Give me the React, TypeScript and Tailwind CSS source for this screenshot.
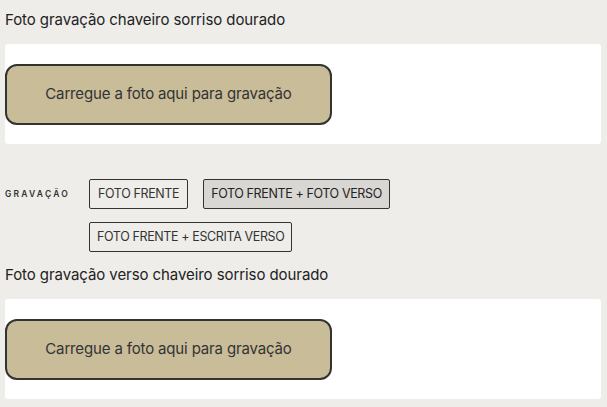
export default function App() {
  return (
    <div className="min-h-screen bg-[#eeede9] px-[5px] pt-[10px] font-['Inter',sans-serif] text-[#222]">
      <p className="text-[15px] leading-[20px] tracking-[-0.005em]">
        Foto gravação chaveiro sorriso dourado
      </p>
      <div className="mt-[14px] h-[100px] w-[596px] rounded-[3px] bg-white pt-[20px]">
        <button className="h-[61px] w-[327px] rounded-[12px] border-2 border-[#333] bg-[#c9bc99] text-[15px] text-[#333] tracking-[-0.01em]">
          Carregue a foto aqui para gravação
        </button>
      </div>

      <div className="mt-[35px] flex">
        <div className="w-[84px] pt-[9px] text-[8.5px] font-semibold tracking-[0.26em] text-[#333]">
          GRAVAÇÃO
        </div>
        <div className="flex w-[320px] flex-wrap gap-x-[15px] gap-y-[13px]">
          <button className="h-[30px] rounded-[2px] border border-[#333] px-[8px] text-[12.5px] tracking-[-0.03em] text-[#333]">
            FOTO FRENTE
          </button>
          <button className="h-[30px] rounded-[2px] border border-[#333] bg-[#d9d7d3] px-[7px] text-[12.5px] tracking-[-0.03em] text-[#222]">
            FOTO FRENTE + FOTO VERSO
          </button>
          <button className="h-[30px] rounded-[2px] border border-[#333] px-[7px] text-[12.5px] tracking-[-0.03em] text-[#333]">
            FOTO FRENTE + ESCRITA VERSO
          </button>
        </div>
      </div>

      <p className="mt-[13px] text-[15px] leading-[20px] tracking-[-0.005em]">
        Foto gravação verso chaveiro sorriso dourado
      </p>
      <div className="mt-[14px] h-[100px] w-[596px] rounded-[3px] bg-white pt-[20px]">
        <button className="h-[61px] w-[327px] rounded-[12px] border-2 border-[#333] bg-[#c9bc99] text-[15px] text-[#333] tracking-[-0.01em]">
          Carregue a foto aqui para gravação
        </button>
      </div>
    </div>
  );
}
